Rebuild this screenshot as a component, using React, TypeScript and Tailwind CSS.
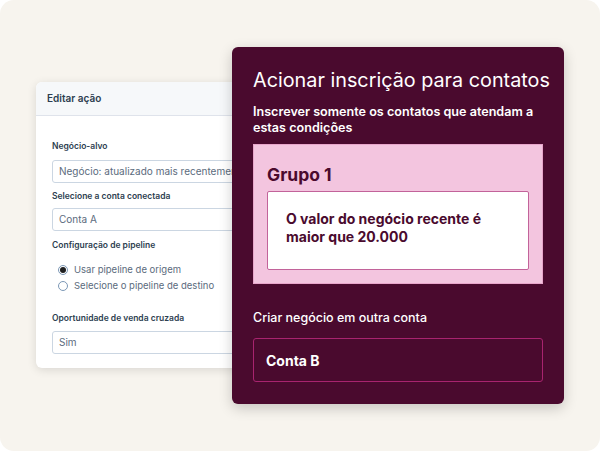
import React from "react";

function Radio({ checked, label }: { checked?: boolean; label: string }) {
  return (
    <div className="flex items-center gap-[6px] h-[14px]">
      <span className="w-[10px] h-[10px] rounded-full border border-[#7c98b6] bg-white flex items-center justify-center">
        {checked && <span className="w-[6px] h-[6px] rounded-full bg-[#1f1f1f]" />}
      </span>
      <span className="text-[9.5px] text-[#5b6b7d]">{label}</span>
    </div>
  );
}

function Field({ value }: { value: string }) {
  return (
    <div className="h-[23px] border border-[#cbd6e2] rounded-[3px] bg-white flex items-center px-[6px] text-[10px] text-[#5b6b7d] whitespace-nowrap overflow-hidden">
      {value}
    </div>
  );
}

export default function App() {
  return (
    <div className="w-[600px] h-[451px] bg-white" style={{ fontFamily: "Inter, 'Noto Sans', sans-serif" }}>
      <div className="relative w-full h-full rounded-[14px] bg-[#f7f4ee] overflow-hidden">
        {/* Left card */}
        <div className="absolute left-[36px] top-[82px] w-[240px] h-[286px] bg-white rounded-[6px] shadow-[0_2px_10px_rgba(0,0,0,0.12)] overflow-hidden">
          <div className="h-[34px] bg-[#f6f8fa] border-b border-[#dfe3eb] flex items-center px-[11px] text-[10px] font-semibold text-[#2d3e50]">
            Editar ação
          </div>
          <div className="pl-[16px] pt-[24px] pb-[16px]">
            <div className="text-[8.5px] leading-[12px] font-semibold text-[#2d3e50]">Negócio-alvo</div>
            <div className="mt-[8px]"><Field value="Negócio: atualizado mais recentemente" /></div>
            <div className="mt-[7px] text-[8.5px] leading-[12px] font-semibold text-[#2d3e50]">Selecione a conta conectada</div>
            <div className="mt-[6px]"><Field value="Conta A" /></div>
            <div className="mt-[8px] text-[8.5px] leading-[12px] font-semibold text-[#2d3e50]">Configuração de pipeline</div>
            <div className="mt-[12px] pl-[6px] flex flex-col gap-[2px]">
              <Radio checked label="Usar pipeline de origem" />
              <Radio label="Selecione o pipeline de destino" />
            </div>
            <div className="mt-[19px] text-[8.5px] leading-[12px] font-semibold text-[#2d3e50]">Oportunidade de venda cruzada</div>
            <div className="mt-[7px]"><Field value="Sim" /></div>
          </div>
        </div>

        {/* Dark panel */}
        <div className="absolute left-[232px] top-[47px] w-[332px] h-[357px] bg-[#4a0a2e] rounded-[6px] shadow-[0_4px_14px_rgba(0,0,0,0.2)] px-[21px] pt-[19px]">
          <div className="text-[19.8px] leading-[28px] text-white font-normal whitespace-nowrap">Acionar inscrição para contatos</div>
          <div className="mt-[10px] text-[12.6px] leading-[16px] text-white font-semibold">
            Inscrever somente os contatos que atendam a<br />estas condições
          </div>
          <div className="mt-[8px] h-[140px] bg-[#f3c5df] border border-[#e8a6cb] px-[13px] pt-[18px]">
            <div className="text-[17.5px] leading-[24px] font-bold text-[#4a0a2e]">Grupo 1</div>
            <div className="mt-[4px] h-[79px] bg-white border border-[#c2639a] rounded-[2px] pl-[18px] pt-[18px] text-[14px] leading-[18px] font-bold text-[#4a0a2e]">
              O valor do negócio recente é<br />maior que 20.000
            </div>
          </div>
          <div className="mt-[26px] text-[12.5px] leading-[16px] text-white font-medium">Criar negócio em outra conta</div>
          <div className="mt-[12px] h-[44px] border border-[#a8246f] rounded-[3px] flex items-center pl-[12px] text-[14px] font-bold text-white">
            Conta B
          </div>
        </div>
      </div>
    </div>
  );
}
